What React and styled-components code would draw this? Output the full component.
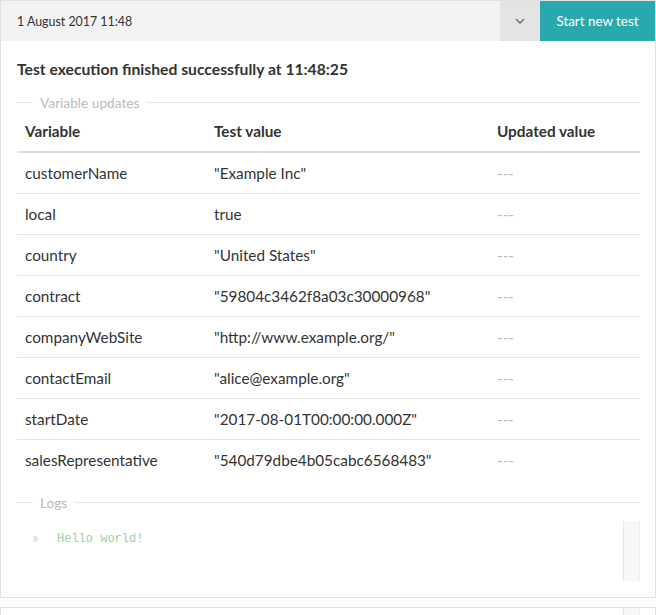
import styled, { createGlobalStyle } from 'styled-components';

const Global = createGlobalStyle`
  body {
    margin: 0;
    background: #fff;
    font-family: Lato, "Open Sans", sans-serif;
    color: #333;
  }
`

const Panel = styled.div`
  border: 1px solid #e0e0e0;
  background: #fff;
  & + & { margin-top: 9px; }
`

const TopBar = styled.div`
  display: flex;
  height: 40px;
  background: #f2f2f2;
`

const DateSelect = styled.div`
  flex: 1;
  display: flex;
  align-items: center;
  padding-left: 16px;
  font-size: 12.4px;
  color: #333;
`

const Caret = styled.div`
  width: 40px;
  display: flex;
  align-items: center;
  justify-content: center;
  background: #e4e4e4;
`

const StartBtn = styled.button`
  width: 115px;
  border: 0;
  background: #29a9ad;
  color: #fff;
  font-family: inherit;
  font-size: 13.4px;
  padding: 0;
`

const Body = styled.div`
  padding: 0 15px 16px 16px;
`

const Title = styled.h3`
  margin: 18px 0 13px;
  font-size: 15.7px;
  line-height: 20px;
  font-weight: 700;
`

const Legend = styled.div`
  display: flex;
  align-items: center;
  height: 20px;
  font-size: 13.7px;
  color: #bbb;
  margin-top: ${p => p.top || 0}px;
  &::before {
    content: '';
    width: 16px;
    border-top: 1px solid #e6e6e6;
  }
  &::after {
    content: '';
    flex: 1;
    border-top: 1px solid #e6e6e6;
  }
  span { padding: 0 7px; }
`

const Table = styled.table`
  width: 100%;
  border-collapse: collapse;
  font-size: 15.3px;
  th {
    text-align: left;
    font-weight: 700;
    height: 37px;
    padding: 0 8px 2px;
    border-bottom: 2px solid #ddd;
  }
  td {
    height: 40px;
    padding: 0 8px;
    border-top: 1px solid #e6e6e6;
  }
  tr:first-child td { border-top: 0; }
  col.a { width: 189px; }
  col.b { width: 283px; }
`

const Empty = styled.td`
  color: #bbb;
`

const LogBox = styled.div`
  display: flex;
  height: ${p => p.h || 60}px;
  margin-top: ${p => p.top || 0}px;
`

const LogLines = styled.div`
  flex: 1;
  padding: 8px 0 0 15px;
`

const LogLine = styled.div`
  display: flex;
  align-items: center;
  height: 20px;
  font-family: "Liberation Mono", "DejaVu Sans Mono", monospace;
  font-size: 12px;
  color: #94d4a0;
  i {
    font-style: normal;
    font-family: Lato, sans-serif;
    font-size: 15px;
    line-height: 20px;
    color: #d0d0d0;
    width: 25px;
    margin-top: -4px;
  }
`

const Track = styled.div`
  width: 15px;
  background: #f8f8f8;
  border-left: 1px solid #e8e8e8;
  border-right: 1px solid #ececec;
`

const rows = [
  ['customerName', '"Example Inc"'],
  ['local', 'true'],
  ['country', '"United States"'],
  ['contract', '"59804c3462f8a03c30000968"'],
  ['companyWebSite', '"http://www.example.org/"'],
  ['contactEmail', '"alice@example.org"'],
  ['startDate', '"2017-08-01T00:00:00.000Z"'],
  ['salesRepresentative', '"540d79dbe4b05cabc6568483"'],
]

export default function App() {
  return (
    <>
      <Global />
      <Panel>
        <TopBar>
          <DateSelect>1 August 2017 11:48</DateSelect>
          <Caret>
            <svg width="10" height="6" viewBox="0 0 10 6">
              <path d="M1 1l4 4 4-4" fill="none" stroke="#666" strokeWidth="1.3" />
            </svg>
          </Caret>
          <StartBtn>Start new test</StartBtn>
        </TopBar>
        <Body>
          <Title>Test execution finished successfully at 11:48:25</Title>
          <Legend><span>Variable updates</span></Legend>
          <Table>
            <colgroup>
              <col className="a" />
              <col className="b" />
              <col />
            </colgroup>
            <thead>
              <tr>
                <th>Variable</th>
                <th>Test value</th>
                <th>Updated value</th>
              </tr>
            </thead>
            <tbody>
              {rows.map(r => (
                <tr key={r[0]}>
                  <td>{r[0]}</td>
                  <td>{r[1]}</td>
                  <Empty>---</Empty>
                </tr>
              ))}
            </tbody>
          </Table>
          <Legend top={12}><span>Logs</span></Legend>
          <LogBox top={9}>
            <LogLines>
              <LogLine><i>»</i>Hello world!</LogLine>
            </LogLines>
            <Track />
          </LogBox>
        </Body>
      </Panel>
      <Panel>
        <Body>
          <LogBox h={60}>
            <LogLines />
            <Track />
          </LogBox>
        </Body>
      </Panel>
    </>
  )
}
